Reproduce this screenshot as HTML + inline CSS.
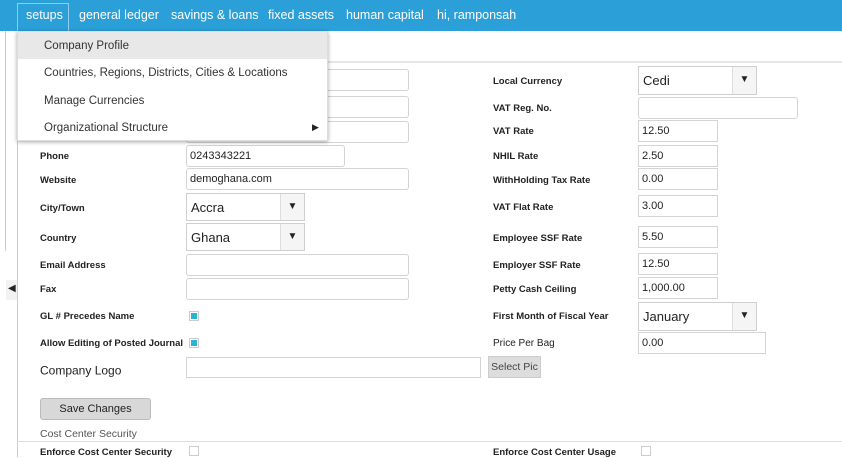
<!DOCTYPE html>
<html><head><meta charset="utf-8"><style>
*{box-sizing:border-box;margin:0;padding:0}
body{width:842px;height:457px;overflow:hidden;background:#fff;font-family:"Liberation Sans","DejaVu Sans",sans-serif;position:relative;color:#222}
.a{position:absolute}
.nav{left:0;top:0;width:842px;height:31px;background:#2a9fd8}
.ni{position:absolute;top:8px;color:#fff;font-size:12.5px;white-space:nowrap}
.lb{position:absolute;font-size:9.5px;font-weight:bold;white-space:nowrap;transform:translateY(-45%)}
.in{position:absolute;border:1px solid #d4d4d4;border-radius:3px;background:#fff;font-size:11px;padding-left:3px;line-height:20px;color:#222}
.sq{position:absolute;border:1px solid #d4d4d4;background:#fff;font-size:11px;padding-left:3px;line-height:20px}
.sel{position:absolute;border:1px solid #cfcfcf;background:#fff;font-size:13px;padding-left:4px}
.sel span.t{position:absolute;left:4px;top:6px}
.sel .b{position:absolute;right:0;top:0;bottom:0;width:24px;border-left:1px solid #ddd;background:#f5f5f5;font-size:10px;text-align:center;padding-top:7px}
.cb{position:absolute;width:10px;height:10px;border:1px solid #ccc;background:#fff}
.cb.on::after{content:"";position:absolute;left:1px;top:1px;width:6px;height:6px;background:#2bb3d3}
.dd{left:17px;top:31px;width:311px;height:110px;background:#fff;box-shadow:0 1px 4px rgba(0,0,0,.35);border:1px solid #ddd}
.di{position:absolute;left:0;width:100%;height:27px;font-size:11.5px;padding-left:26px;line-height:28px;color:#333}
</style></head><body>
<div class="a nav">
 <div class="a" style="left:17px;top:3px;width:52px;height:28px;border:1px solid #8fcdee;border-bottom:none"></div>
 <div class="ni" style="left:26px">setups</div>
 <div class="ni" style="left:79px">general ledger</div>
 <div class="ni" style="left:171px">savings &amp; loans</div>
 <div class="ni" style="left:268px">fixed assets</div>
 <div class="ni" style="left:346px">human capital</div>
 <div class="ni" style="left:437px">hi, ramponsah</div>
</div>
<div class="a" style="left:17px;top:31px;width:1px;height:426px;background:#ccc"></div>
<div class="a" style="left:5px;top:31px;width:1px;height:220px;background:#ccc"></div>
<div class="a" style="left:6px;top:280px;width:11px;height:20px;background:#f2f2f2"></div>
<div class="a" style="left:8px;top:283px;font-size:10px">◀</div>
<div class="a" style="left:17px;top:61px;width:825px;height:2px;background:#e6e6e6"></div>

<div class="lb" style="left:40px;top:156px">Phone</div>
<div class="lb" style="left:40px;top:180px">Website</div>
<div class="lb" style="left:40px;top:208px">City/Town</div>
<div class="lb" style="left:40px;top:238px">Country</div>
<div class="lb" style="left:40px;top:265px">Email Address</div>
<div class="lb" style="left:40px;top:289px">Fax</div>
<div class="lb" style="left:40px;top:316px">GL # Precedes Name</div>
<div class="lb" style="left:40px;top:343px">Allow Editing of Posted Journal</div>
<div class="lb" style="left:40px;top:370px;font-size:12px;font-weight:normal">Company Logo</div>

<div class="in" style="left:186px;top:69px;width:223px;height:22px"></div>
<div class="in" style="left:186px;top:96px;width:223px;height:22px"></div>
<div class="in" style="left:186px;top:121px;width:223px;height:22px"></div>
<div class="in" style="left:186px;top:145px;width:159px;height:22px">0243343221</div>
<div class="in" style="left:186px;top:168px;width:223px;height:22px">demoghana.com</div>
<div class="sel" style="left:186px;top:193px;width:119px;height:28px"><span class="t">Accra</span><div class="b">▼</div></div>
<div class="sel" style="left:186px;top:223px;width:119px;height:28px"><span class="t">Ghana</span><div class="b">▼</div></div>
<div class="in" style="left:186px;top:254px;width:223px;height:22px"></div>
<div class="in" style="left:186px;top:278px;width:223px;height:22px"></div>
<div class="cb on" style="left:189px;top:311px"></div>
<div class="cb on" style="left:189px;top:338px"></div>
<div class="in" style="left:186px;top:357px;width:295px;height:21px;border-radius:0"></div>
<div class="a" style="left:488px;top:356px;width:53px;height:22px;background:#ddd;border:1px solid #ccc;font-size:10.5px;text-align:center;line-height:20px;color:#444">Select Pic</div>
<div class="a" style="left:40px;top:398px;width:111px;height:22px;background:#d8d8d8;border:1px solid #bbb;border-radius:3px;font-size:11px;text-align:center;line-height:20px">Save Changes</div>
<div class="a" style="left:40px;top:428px;font-size:10.5px;color:#555">Cost Center Security</div>
<div class="a" style="left:17px;top:441px;width:825px;height:1px;background:#ddd"></div>
<div class="lb" style="left:40px;top:452px">Enforce Cost Center Security</div>
<div class="cb" style="left:189px;top:446px"></div>

<div class="lb" style="left:493px;top:81px">Local Currency</div>
<div class="lb" style="left:493px;top:108px">VAT Reg. No.</div>
<div class="lb" style="left:493px;top:131px">VAT Rate</div>
<div class="lb" style="left:493px;top:156px">NHIL Rate</div>
<div class="lb" style="left:493px;top:180px">WithHolding Tax Rate</div>
<div class="lb" style="left:493px;top:207px">VAT Flat Rate</div>
<div class="lb" style="left:493px;top:238px">Employee SSF Rate</div>
<div class="lb" style="left:493px;top:265px">Employer SSF Rate</div>
<div class="lb" style="left:493px;top:289px">Petty Cash Ceiling</div>
<div class="lb" style="left:493px;top:316px">First Month of Fiscal Year</div>
<div class="lb" style="left:493px;top:343px;font-weight:normal;font-size:10px">Price Per Bag</div>
<div class="lb" style="left:493px;top:452px">Enforce Cost Center Usage</div>

<div class="sel" style="left:638px;top:66px;width:119px;height:29px"><span class="t">Cedi</span><div class="b">▼</div></div>
<div class="in" style="left:638px;top:97px;width:160px;height:22px"></div>
<div class="sq" style="left:638px;top:120px;width:80px;height:22px">12.50</div>
<div class="sq" style="left:638px;top:145px;width:80px;height:22px">2.50</div>
<div class="sq" style="left:638px;top:168px;width:80px;height:22px">0.00</div>
<div class="sq" style="left:638px;top:195px;width:80px;height:22px">3.00</div>
<div class="sq" style="left:638px;top:226px;width:80px;height:22px">5.50</div>
<div class="sq" style="left:638px;top:253px;width:80px;height:22px">12.50</div>
<div class="sq" style="left:638px;top:277px;width:80px;height:22px">1,000.00</div>
<div class="sel" style="left:638px;top:302px;width:119px;height:29px"><span class="t">January</span><div class="b">▼</div></div>
<div class="sq" style="left:638px;top:332px;width:128px;height:22px">0.00</div>
<div class="cb" style="left:641px;top:446px"></div>

<div class="a dd">
 <div class="di" style="top:0;background:#e8e8e8">Company Profile</div>
 <div class="di" style="top:27px">Countries, Regions, Districts, Cities &amp; Locations</div>
 <div class="di" style="top:55px">Manage Currencies</div>
 <div class="di" style="top:82px">Organizational Structure</div>
 <div class="a" style="left:294px;top:90px;font-size:9px">▶</div>
</div>
</body></html>
